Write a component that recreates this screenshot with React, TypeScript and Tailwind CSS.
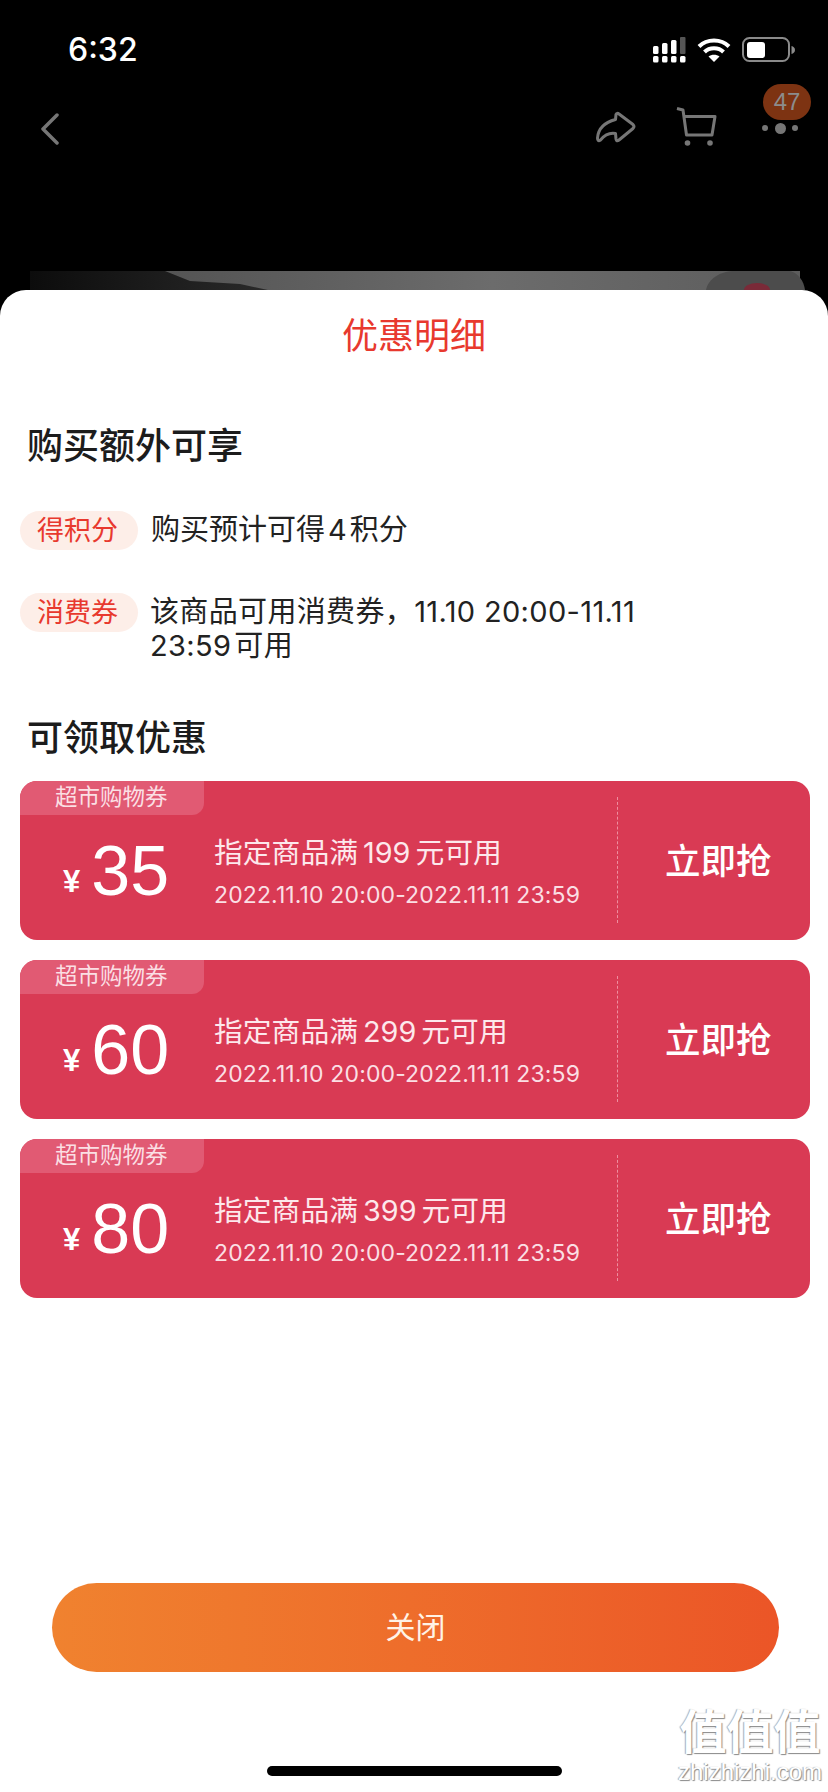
import React from 'react';

const CJK = "font-['Inter','Noto_Sans_CJK_SC',sans-serif]";

const coupons = [
  { amount: '35', limit: '199' },
  { amount: '60', limit: '299' },
  { amount: '80', limit: '399' },
];

function StatusIcons() {
  return (
    <svg width="142" height="26" viewBox="0 0 142 26" fill="none">
      {/* signal */}
      <g fill="#fff">
        <rect x="0" y="9" width="5.500" height="8" rx="1.500" />
        <rect x="9" y="6" width="5.500" height="11" rx="1.500" />
        <rect x="18" y="3" width="5.500" height="14" rx="1.500" />
        <rect x="0" y="19" width="5.500" height="6.500" rx="1.500" />
        <rect x="9" y="19" width="5.500" height="6.500" rx="1.500" />
        <rect x="18" y="19" width="5.500" height="6.500" rx="1.500" />
        <rect x="27" y="19" width="5.500" height="6.500" rx="1.500" />
      </g>
      <rect x="27" y="0" width="5.500" height="17" rx="1" fill="#555" />
      {/* wifi */}
      <path d="M46 9.500C54 1.500 68 1.500 76 9.500" stroke="#fff" strokeWidth="4" />
      <path d="M51.500 15C56.500 10 65.500 10 70.500 15" stroke="#fff" strokeWidth="4" />
      <path d="M61 25L55.500 19.500C58.500 17 63.500 17 66.500 19.500Z" fill="#fff" />
      {/* battery */}
      <rect x="90" y="1" width="46" height="23" rx="6.500" stroke="#8a8a8a" strokeWidth="2" />
      <rect x="94" y="5" width="18" height="16" rx="3" fill="#fff" />
      <path d="M138.500 9C140.500 9.500 142 11 142 13C142 15 140.500 16.500 138.500 17Z" fill="#8a8a8a" />
    </svg>
  );
}

function NavIcons() {
  return (
    <div className="flex items-start">
      <svg width="40" height="32" viewBox="0 0 40 32" fill="none" className="mt-[32px]">
        <path
          d="M20 3.500Q21 1.500 23 3L37 13.500Q39 15.500 37 17.500L23 29Q20.500 31 20 28L19.500 22.500Q11 21 4.500 29Q1.500 31 1.500 27Q2.500 13 19.500 8.500Z"
          stroke="#767676"
          strokeWidth="3"
          strokeLinejoin="round"
        />
      </svg>
      <svg width="42" height="40" viewBox="0 0 42 40" fill="none" className="ml-[40px] mt-[28px]">
        <path d="M1 1.500L7 3L10.500 28H36L39 9.500H8" stroke="#767676" strokeWidth="3" strokeLinejoin="round" />
        <circle cx="11.500" cy="36" r="2.800" fill="#767676" />
        <circle cx="34" cy="36" r="2.800" fill="#767676" />
      </svg>
      <div className="relative ml-[44px] w-[50px] h-[64px] mt-[5px]">
        <div className="absolute left-[1px] top-0 w-[48px] h-[36px] rounded-full bg-[#7d3312] flex items-center justify-center text-[24px] leading-none text-[#8c8c8c] font-['Liberation_Sans',sans-serif]">
          47
        </div>
        <div className="absolute left-0 top-[38px] w-[36px] h-[12px] flex items-center justify-between">
          <span className="w-[6px] h-[6px] rounded-full bg-[#767676]" />
          <span className="w-[11px] h-[11px] rounded-full bg-[#767676]" />
          <span className="w-[6px] h-[6px] rounded-full bg-[#767676]" />
        </div>
      </div>
    </div>
  );
}

function Coupon({ amount, limit }: { amount: string; limit: string }) {
  return (
    <div className="relative h-[159px] rounded-[17px] bg-[#d93a54] text-white overflow-hidden flex">
      <div className="absolute left-0 top-0 w-[184px] h-[34px] rounded-br-[12px] bg-[#e15a73] pl-[35px] text-[22.500px] leading-[32px] text-[#fbdfe4]">
        超市购物券
      </div>
      <div className="w-[194px] pl-[43px] pt-[59px] flex items-end h-[120px] font-['Liberation_Sans',sans-serif]">
        <span className="text-[31px] leading-[36px] font-bold mr-[11px] mb-[1px]">¥</span>
        <span className="text-[70px] leading-[60px]">{amount}</span>
      </div>
      <div className="w-[403px] pt-[53px]">
        <div className="text-[28.800px] leading-[38px] text-[#fde8ec]">
          指定商品满<span className="mx-[5px]">{limit}</span>元可用
        </div>
        <div className="mt-[9px] text-[23px] leading-[28px] tracking-[0.130px] text-[#fbdfe4]">2022.11.10 20:00-2022.11.11 23:59</div>
      </div>
      <div className="mt-[16px] h-[126px] border-l border-dashed border-[#ee8e9f]" />
      <div className="flex-1 pl-[47px] pt-[59px] text-[35.500px] leading-[44px] font-medium">立即抢</div>
    </div>
  );
}

function Pill({ children }: { children: React.ReactNode }) {
  return (
    <span className="shrink-0 w-[118px] h-[39px] pr-[3px] rounded-full bg-[#fdeee8] text-[#e8392e] text-[27px] leading-[39px] text-center">
      {children}
    </span>
  );
}

export default function App() {
  return (
    <div className={`relative w-[828px] h-[1792px] bg-black flex flex-col overflow-hidden ${CJK}`}>
      {/* status bar */}
      <div className="h-[79px] flex items-start justify-between pt-[31px] pl-[68px] pr-[33px]">
        <span className="text-[32px] leading-[38px] font-medium text-white">6:32</span>
        <div className="mt-[6px]">
          <StatusIcons />
        </div>
      </div>

      {/* page nav, dimmed */}
      <div className="h-[192px] flex items-start justify-between pl-[41px] pr-[16px]">
        <svg width="20" height="32" viewBox="0 0 20 32" fill="none" className="mt-[34px] -ml-[1px]">
          <path d="M17 2L3 16L17 30" stroke="#767676" strokeWidth="3.500" strokeLinecap="round" strokeLinejoin="round" />
        </svg>
        <NavIcons />
      </div>

      {/* dimmed product photo behind the sheet */}
      <svg width="828" height="19" viewBox="0 0 828 19" className="block shrink-0">
        <defs>
          <linearGradient id="strip" x1="0" x2="1" y1="0" y2="0">
            <stop offset="0" stopColor="#4a4a4a" />
            <stop offset="0.6" stopColor="#6c6c6c" />
            <stop offset="1" stopColor="#5c5c5c" />
          </linearGradient>
          <linearGradient id="hill" x1="0" x2="1" y1="0" y2="0">
            <stop offset="0" stopColor="#0c0c0c" />
            <stop offset="1" stopColor="#2a2a2a" />
          </linearGradient>
        </defs>
        <rect x="30" y="0" width="770" height="19" fill="url(#strip)" />
        <path d="M30 0H165L190 10L240 13L268 19H30Z" fill="url(#hill)" />
        <path d="M706 19C708 8 720 0 735 0H790C798 2 804 10 805 19Z" fill="#4c4c4c" />
        <ellipse cx="757" cy="19" rx="13" ry="7" fill="#7a2a38" />
      </svg>

      {/* sheet */}
      <div className="flex-1 bg-white rounded-t-[26px] flex flex-col pt-[21px] relative">
        <div className="text-center text-[36px] leading-[50px] text-[#e8392e]">优惠明细</div>

        <div className="mt-[60px] pl-[27px] text-[36px] leading-[50px] font-medium text-[#1c1c1c]">购买额外可享</div>

        <div className="mt-[40px] pl-[20px] flex">
          <Pill>得积分</Pill>
          <div className="ml-[13px] text-[29px] leading-[34px] text-[#222] pt-[2px]">
            购买预计可得<span className="mx-[3px]">4</span>积分
          </div>
        </div>

        <div className="mt-[43px] pl-[20px] flex">
          <Pill>消费券</Pill>
          <div className="ml-[12px] w-[515px] text-[29px] leading-[34px] text-[#222] pt-[2px] tracking-[0.350px]">
            该商品可用消费券，11.10 20:00-11.11 23:59{'\u200a'}可用
          </div>
        </div>

        <div className="mt-[50px] pl-[27px] text-[36px] leading-[50px] font-medium text-[#1c1c1c]">可领取优惠</div>

        <div className="mt-[18px] mx-[20px] w-[790px] flex flex-col gap-[20px]">
          {coupons.map((c) => (
            <Coupon key={c.amount} amount={c.amount} limit={c.limit} />
          ))}
        </div>

        <div className="mt-auto ml-[52px] mr-[49px] h-[89px] rounded-full bg-gradient-to-r from-[#f0822f] to-[#eb5527] flex items-center justify-center text-[30px] text-[#fff3e6]">
          关闭
        </div>
        <div className="mt-[94px] mb-[16px] mx-auto w-[295px] h-[10px] rounded-full bg-black" />

        {/* site watermark */}
        <div className="absolute left-[678px] bottom-[8px] w-[144px] text-center text-white [text-shadow:1px_1px_1px_#888,-1px_0_1px_#aaa]">
          <div className="text-[47px] leading-[50px] font-bold">值值值</div>
          <div className="mt-[3px] text-[24px] leading-[24px] font-['Liberation_Sans',sans-serif]">zhizhizhi.com</div>
        </div>
      </div>
    </div>
  );
}
